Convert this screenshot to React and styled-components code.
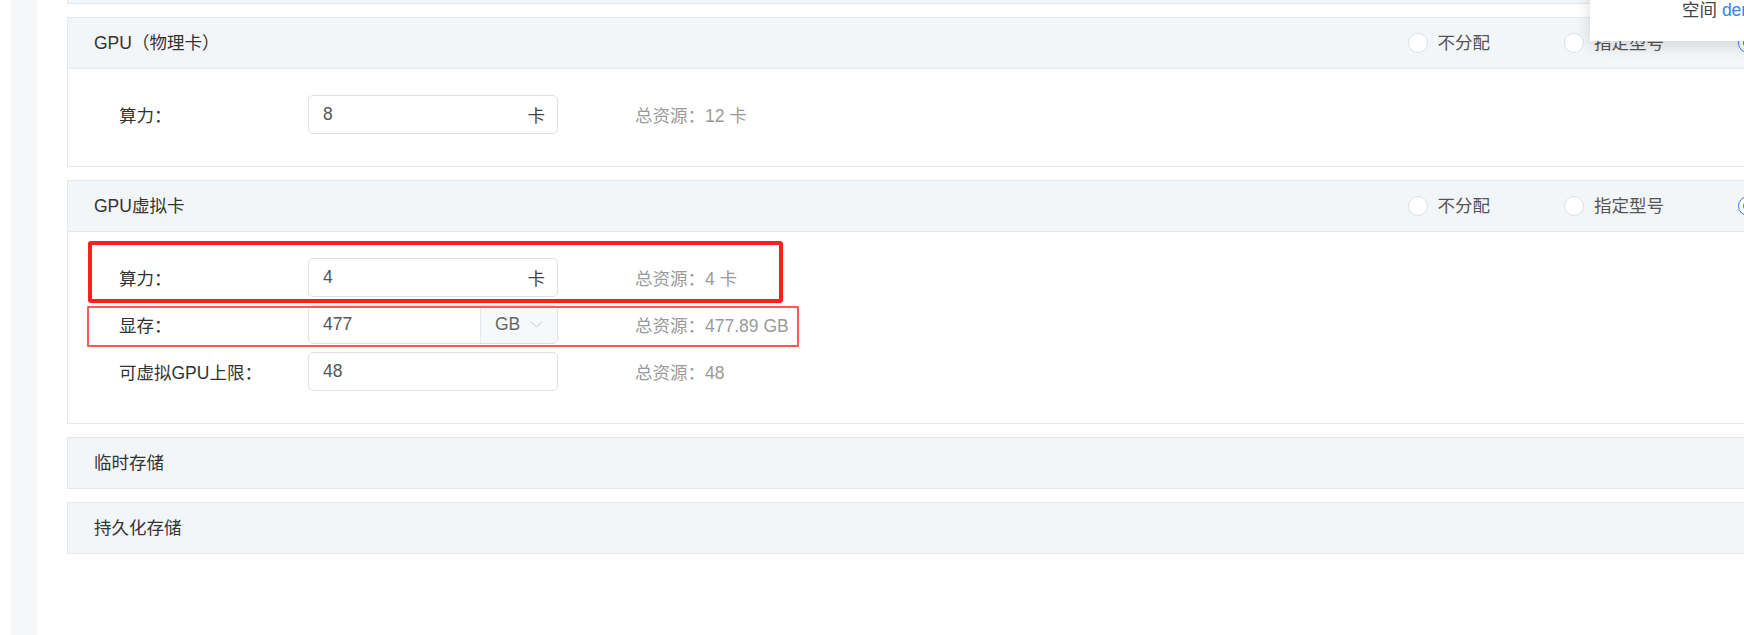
import React from "react";
import styled, { createGlobalStyle } from "styled-components";
import { ChevronDown } from "lucide-react";

const GlobalStyle = createGlobalStyle`
  html, body {
    margin: 0;
    padding: 0;
    background: #fff;
  }
  body {
    font-family: "Liberation Sans", "Noto Sans CJK SC", sans-serif;
    font-size: 17.5px;
    color: #333;
    overflow: hidden;
  }
  * { box-sizing: border-box; }
`;

const Page = styled.div`
  position: relative;
  display: flex;
  height: 635px;
  padding-left: 11px;
  overflow: hidden;
  background: #fff;
`;

const SideRail = styled.div`
  flex: none;
  width: 26px;
  background: #f4f6f8;
`;

const Content = styled.main`
  flex: none;
  width: 1798px;
  margin-left: 30px;
  display: flex;
  flex-direction: column;
  gap: 13px;
`;

const PanelTail = styled.div`
  height: 4px;
  background: #f3f6f8;
  border: 1px solid #e6e9ec;
  border-top: none;
`;

const Panel = styled.section`
  border: 1px solid #e6e9ec;
  background: #fff;
`;

const PanelHeader = styled.header`
  display: flex;
  align-items: center;
  height: ${(p) => (p.$open ? "51px" : "50px")};
  padding: 0 26px;
  background: #f3f6f8;
  border-bottom: ${(p) => (p.$open ? "1px solid #e6e9ec" : "none")};
`;

const PanelTitle = styled.h3`
  flex: 1;
  margin: 0;
  font-size: 17.5px;
  font-weight: 400;
  color: #333;
  line-height: 24px;
`;

const RadioGroup = styled.div`
  display: flex;
  align-items: center;
  gap: 74px;
`;

const RadioItem = styled.label`
  display: flex;
  align-items: center;
  gap: 10px;
  color: #555;
  line-height: 24px;
  white-space: nowrap;
`;

const RadioDot = styled.span`
  position: relative;
  width: 20px;
  height: 20px;
  border-radius: 50%;
  background: #fff;
  border: 1px solid ${(p) => (p.$checked ? "#2f7cf6" : "#dcdfe6")};
  &::after {
    content: "";
    display: ${(p) => (p.$checked ? "block" : "none")};
    position: absolute;
    inset: 4px;
    border-radius: 50%;
    background: #2f7cf6;
  }
`;

const PanelBody = styled.div`
  position: relative;
  padding: 26px 0 24px 51px;
`;

const FormRow = styled.div`
  display: flex;
  align-items: center;
  height: 39px;
  margin-bottom: 8px;
`;

const FieldLabel = styled.span`
  flex: none;
  width: 189px;
  color: #333;
`;

const InputBox = styled.div`
  flex: none;
  display: flex;
  align-items: center;
  width: 250px;
  height: 39px;
  border: 1px solid #dcdfe6;
  border-radius: 5px;
  background: #fff;
  overflow: hidden;
`;

const InputValue = styled.span`
  flex: 1;
  padding-left: 14px;
  color: #555;
`;

const InputSuffix = styled.span`
  padding-right: 12px;
  color: #444;
`;

const UnitSelect = styled.div`
  flex: none;
  display: flex;
  align-items: center;
  gap: 6px;
  width: 77px;
  height: 100%;
  padding-left: 14px;
  background: #f7f8fa;
  border-left: 1px solid #e4e7ed;
  color: #666;
`;

const TotalText = styled.span`
  margin-left: 77px;
  color: #9a9a9a;
  white-space: nowrap;
`;

const Highlight = styled.div`
  position: absolute;
  left: ${(p) => p.$left}px;
  top: ${(p) => p.$top}px;
  width: ${(p) => p.$width}px;
  height: ${(p) => p.$height}px;
  border: ${(p) => (p.$strong ? "4px solid #ff1f1f" : "2.5px solid #ff5858")};
  border-radius: ${(p) => (p.$strong ? "3px" : "1px")};
  pointer-events: none;
`;

const Popover = styled.div`
  position: absolute;
  left: 1590px;
  top: -20px;
  width: 320px;
  height: 61px;
  padding: 18px 0 0 92px;
  background: #fff;
  box-shadow: 0 4px 14px rgba(0, 0, 0, 0.14);
  color: #444;
  line-height: 24px;
  white-space: nowrap;
`;

const LinkText = styled.span`
  color: #1e8cf0;
`;

const allocModes = ["不分配", "指定型号", "任意型号"];

function Allocation() {
  return (
    <RadioGroup>
      {allocModes.map((m, i) => (
        <RadioItem key={m}>
          <RadioDot $checked={i === 2} />
          {m}
        </RadioItem>
      ))}
    </RadioGroup>
  );
}

function Field({ label, value, suffix, unit, total }) {
  return (
    <FormRow>
      <FieldLabel>{label}</FieldLabel>
      <InputBox>
        <InputValue>{value}</InputValue>
        {suffix && <InputSuffix>{suffix}</InputSuffix>}
        {unit && (
          <UnitSelect>
            {unit}
            <ChevronDown size={21} strokeWidth={1} color="#b8bcc4" />
          </UnitSelect>
        )}
      </InputBox>
      <TotalText>{total}</TotalText>
    </FormRow>
  );
}

export default function App() {
  return (
    <>
      <GlobalStyle />
      <Page>
        <SideRail />
        <Content>
          <PanelTail />
          <Panel>
            <PanelHeader $open>
              <PanelTitle>GPU（物理卡）</PanelTitle>
              <Allocation />
            </PanelHeader>
            <PanelBody>
              <Field label="算力：" value="8" suffix="卡" total="总资源：12 卡" />
            </PanelBody>
          </Panel>
          <Panel>
            <PanelHeader $open>
              <PanelTitle>GPU虚拟卡</PanelTitle>
              <Allocation />
            </PanelHeader>
            <PanelBody>
              <Field label="算力：" value="4" suffix="卡" total="总资源：4 卡" />
              <Field label="显存：" value="477" unit="GB" total="总资源：477.89 GB" />
              <Field label="可虚拟GPU上限：" value="48" total="总资源：48" />
              <Highlight $strong $left={20} $top={9} $width={695} $height={62} />
              <Highlight $left={19} $top={74} $width={712} $height={41} />
            </PanelBody>
          </Panel>
          <Panel>
            <PanelHeader>
              <PanelTitle>临时存储</PanelTitle>
            </PanelHeader>
          </Panel>
          <Panel>
            <PanelHeader>
              <PanelTitle>持久化存储</PanelTitle>
            </PanelHeader>
          </Panel>
        </Content>
        <Popover>
          空间 <LinkText>demo</LinkText>
        </Popover>
      </Page>
    </>
  );
}
